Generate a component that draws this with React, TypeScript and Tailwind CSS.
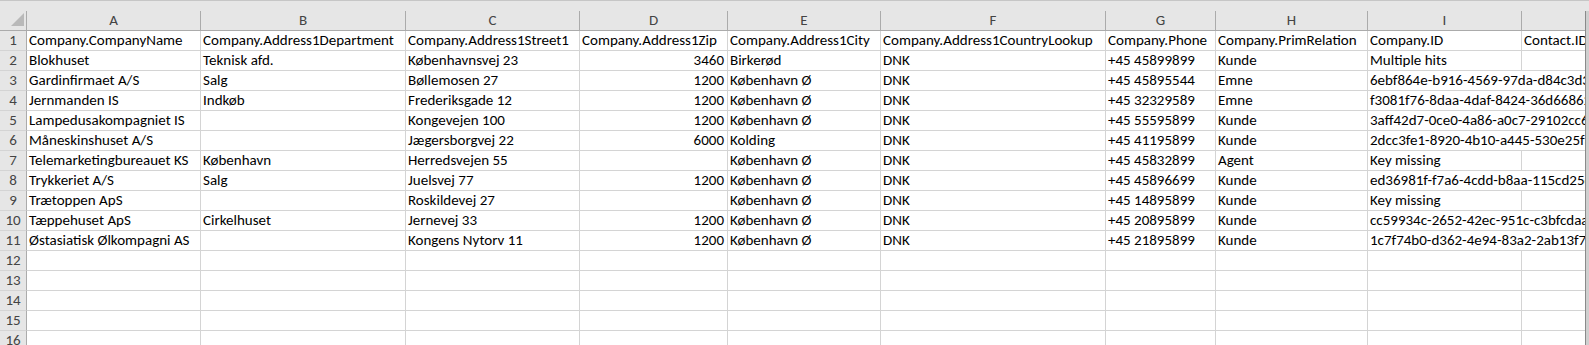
import React from "react"

const cols = ["A", "B", "C", "D", "E", "F", "G", "H", "I"]

type Row = string[]

const headers: Row = [
    "Company.CompanyName",
    "Company.Address1Department",
    "Company.Address1Street1",
    "Company.Address1Zip",
    "Company.Address1City",
    "Company.Address1CountryLookup",
    "Company.Phone",
    "Company.PrimRelation",
    "Company.ID",
    "Contact.ID",
]

const rows: Row[] = [
    ["Blokhuset", "Teknisk afd.", "Københavnsvej 23", "3460", "Birkerød", "DNK", "+45 45899899", "Kunde", "Multiple hits", ""],
    ["Gardinfirmaet A/S", "Salg", "Bøllemosen 27", "1200", "København Ø", "DNK", "+45 45895544", "Emne", "6ebf864e-b916-4569-97da-d84c3d3f2a1b", ""],
    ["Jernmanden IS", "Indkøb", "Frederiksgade 12", "1200", "København Ø", "DNK", "+45 32329589", "Emne", "f3081f76-8daa-4daf-8424-36d668620c4e", ""],
    ["Lampedusakompagniet IS", "", "Kongevejen 100", "1200", "København Ø", "DNK", "+45 55595899", "Kunde", "3aff42d7-0ce0-4a86-a0c7-29102cc68d19", ""],
    ["Måneskinshuset A/S", "", "Jægersborgvej 22", "6000", "Kolding", "DNK", "+45 41195899", "Kunde", "2dcc3fe1-8920-4b10-a445-530e25f3b7a2", ""],
    ["Telemarketingbureauet KS", "København", "Herredsvejen 55", "", "København Ø", "DNK", "+45 45832899", "Agent", "Key missing", ""],
    ["Trykkeriet A/S", "Salg", "Juelsvej 77", "1200", "København Ø", "DNK", "+45 45896699", "Kunde", "ed36981f-f7a6-4cdd-b8aa-115cd25c0e83", ""],
    ["Trætoppen ApS", "", "Roskildevej 27", "", "København Ø", "DNK", "+45 14895899", "Kunde", "Key missing", ""],
    ["Tæppehuset ApS", "Cirkelhuset", "Jernevej 33", "1200", "København Ø", "DNK", "+45 20895899", "Kunde", "cc59934c-2652-42ec-951c-c3bfcdaa6e70", ""],
    ["Østasiatisk Ølkompagni AS", "", "Kongens Nytorv 11", "1200", "København Ø", "DNK", "+45 21895899", "Kunde", "1c7f74b0-d362-4e94-83a2-2ab13f77a5c1", ""],
    ["", "", "", "", "", "", "", "", "", ""],
    ["", "", "", "", "", "", "", "", "", ""],
    ["", "", "", "", "", "", "", "", "", ""],
    ["", "", "", "", "", "", "", "", "", ""],
    ["", "", "", "", "", "", "", "", "", ""],
]

const gridCols = "grid grid-cols-[27px_174px_205px_174px_148px_153px_225px_110px_152px_154px_140px]"

const Cell = ({ value, col, row }: { value: string; col: number; row: number }) => {
    // long ids spill into the empty J column, like Excel does
    const spills = col === 8 && value.length > 14
    const right = col === 3 && row > 0
    return (
        <div
            className={`h-5 border-b border-[#d4d4d4] whitespace-nowrap leading-[19px] ${spills ? "" : "border-r"} ${right ? "text-right pr-[3px]" : "pl-[2px]"} ${spills ? "overflow-visible" : "overflow-hidden"}`}
        >
            {value}
        </div>
    )
}

export default function App() {
    return (
        <div
            className="w-[1589px] h-[345px] overflow-hidden bg-[#e6e6e6] flex flex-col text-[15px] text-black"
            style={{ fontFamily: "Calibri, Carlito, Lato, sans-serif" }}
        >
            <div className="h-[11px] shrink-0 border-t border-[#c6c6c6] bg-[#e6e6e6]" />
            <div className="flex flex-1 min-h-0">
                <div className="w-[1585px] overflow-hidden bg-white">
                    {/* column letters */}
                    <div className={`${gridCols} h-5 bg-[#e6e6e6] text-[#444]`}>
                        <div className="relative border-r border-b border-[#ababab]">
                            <svg className="absolute left-[11px] top-[2px]" width="13" height="13" viewBox="0 0 13 13">
                                <polygon points="13,0 13,13 0,13" fill="#b9b9b9" />
                            </svg>
                        </div>
                        {cols.map(c => (
                            <div key={c} className="border-r border-b border-[#ababab] text-center leading-[19px]">
                                {c}
                            </div>
                        ))}
                        <div className="border-b border-[#ababab]" />
                    </div>
                    {[headers, ...rows].map((r, i) => (
                        <div key={i} className={gridCols}>
                            <div className="h-5 bg-[#e6e6e6] border-r border-[#ababab] border-b border-b-[#d4d4d4] text-center leading-[19px] text-[#444]">
                                {i + 1}
                            </div>
                            {r.map((v, j) => (
                                <Cell key={j} value={v} col={j} row={i} />
                            ))}
                        </div>
                    ))}
                </div>
                <div className="w-1 border-l border-[#8a8a8a] bg-[#cfcfcf]" />
            </div>
        </div>
    )
}
